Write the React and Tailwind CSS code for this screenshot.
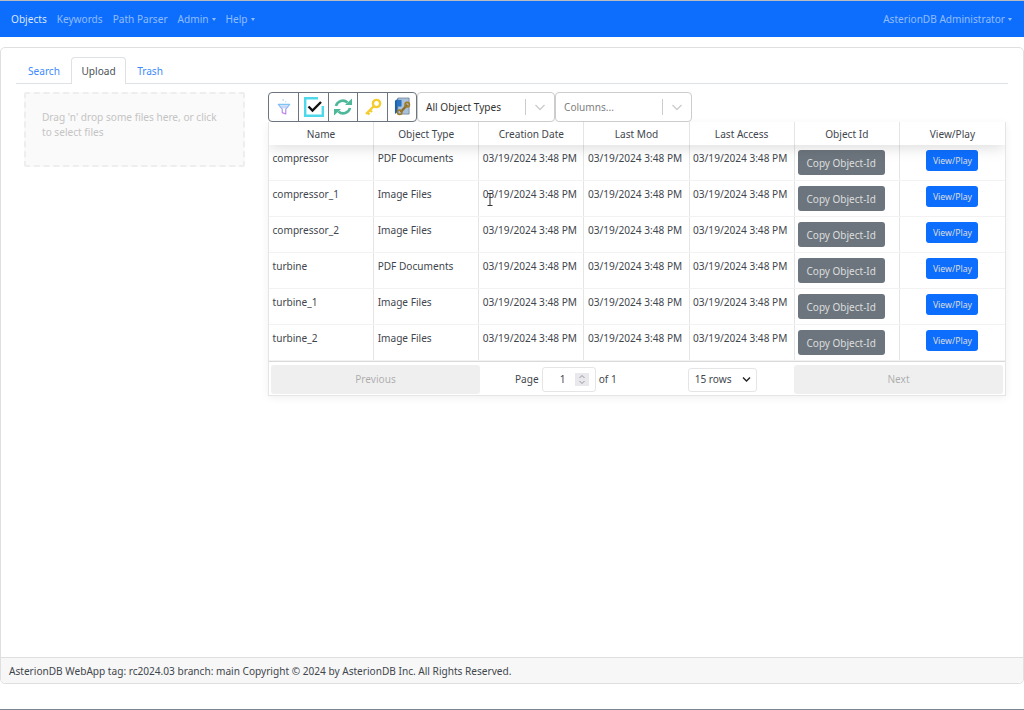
const rows = [
  ["compressor", "PDF Documents"],
  ["compressor_1", "Image Files"],
  ["compressor_2", "Image Files"],
  ["turbine", "PDF Documents"],
  ["turbine_1", "Image Files"],
  ["turbine_2", "Image Files"],
];
const date = "03/19/2024 3:48 PM";
const headers = ["Name", "Object Type", "Creation Date", "Last Mod", "Last Access", "Object Id", "View/Play"];

function Caret() {
  return <span className="ml-[3px] inline-block align-[2px] border-x-[2.5px] border-t-[3px] border-x-transparent border-t-current" />;
}

function Funnel() {
  return (
    <svg width="14" height="18" viewBox="0 0 16 20">
      <defs>
        <linearGradient id="fg" x1="0" y1="0" x2="0" y2="1">
          <stop offset="0" stopColor="#7cc4f5" />
          <stop offset="1" stopColor="#c77df0" />
        </linearGradient>
      </defs>
      <circle cx="7" cy="2" r="0.9" fill="#8cc8f5" />
      <circle cx="10" cy="4" r="0.7" fill="#8cc8f5" />
      <path d="M1.5 7h13l-4.5 5.5V18l-4 -1.5v-4z" fill="none" stroke="url(#fg)" strokeWidth="1.4" strokeLinejoin="round" />
      <path d="M3 8h10l-3 3.5H6z" fill="#a9c9f5" opacity="0.7" />
    </svg>
  );
}
function Check() {
  return (
    <svg width="20" height="20" viewBox="0 0 20 20">
      <path d="M14 1.2H1.2v17.6h17.6V9" fill="none" stroke="#4dd9ea" strokeWidth="2.4" />
      <path d="M4.5 9.5l4 4L17 5" fill="none" stroke="#111111" strokeWidth="2.4" />
    </svg>
  );
}
function Refresh() {
  return (
    <svg width="20" height="18" viewBox="0 0 20 18" fill="none" stroke="#4fb89a" strokeWidth="2.6">
      <path d="M3 8a7 7 0 0 1 11.5-3.5" />
      <path d="M17 10a7 7 0 0 1-11.5 3.5" />
      <path d="M12 7h7V0.5z" fill="#4fb89a" stroke="none" />
      <path d="M8 11H1v6.5z" fill="#4fb89a" stroke="none" />
    </svg>
  );
}
function Key() {
  return (
    <svg width="18" height="18" viewBox="0 0 18 18" fill="none" stroke="#f5cc2e">
      <circle cx="12.5" cy="5.5" r="3.6" strokeWidth="2.4" />
      <path d="M10 8L2 16M3.5 14.5l2 2M6 12l2 2" strokeWidth="2.4" />
    </svg>
  );
}
function Linked() {
  return (
    <svg width="17" height="20" viewBox="0 0 18 21">
      <path d="M1 4l4-3v14l-4 3z" fill="#1e5fa8" />
      <path d="M4 1h12v17H4z" fill="#a9c2da" stroke="#6b7f93" strokeWidth="0.8" />
      <path d="M3 3h5v7H3z" fill="#2a72c4" />
      <path d="M7 16l7-8" stroke="#8a6a25" strokeWidth="2.4" fill="none" />
      <circle cx="6" cy="16" r="2.4" fill="none" stroke="#a27a22" strokeWidth="1.6" />
      <circle cx="14" cy="8" r="2.4" fill="none" stroke="#a27a22" strokeWidth="1.6" />
    </svg>
  );
}

function SelectBox({ label, muted, width }) {
  return (
    <div className={`flex h-[30px] items-center rounded-[4px] border border-[#cccccc] bg-white ${width}`}>
      <span className={`flex-1 truncate pl-2 pt-[2px] ${muted ? "text-[#808080]" : "text-[#333333]"}`}>{label}</span>
      <span className="h-[16px] w-px bg-[#cccccc]" />
      <span className="flex w-[28px] justify-center">
        <svg width="10" height="7" viewBox="0 0 10 7" fill="none" stroke="#cccccc" strokeWidth="1.3">
          <path d="M0.5 1l4.5 4.5L9.5 1" />
        </svg>
      </span>
    </div>
  );
}

export default function App() {
  return (
    <div className="h-[710px] w-[1024px] overflow-hidden bg-white font-['Noto_Sans',sans-serif] text-[10.1px] text-[#3f464d]">
      <div className="h-px bg-[#b9bcc0]" />
      <nav className="flex h-[36px] items-center justify-between bg-[#0d6efd] pl-[11px] pr-[12px] pt-[2px] text-[#ffffff8c]">
        <div className="flex items-center gap-[10px]">
          <span className="text-[#ffffffd9]">Objects</span>
          <span>Keywords</span>
          <span>Path Parser</span>
          <span>Admin<Caret /></span>
          <span>Help<Caret /></span>
        </div>
        <span>AsterionDB Administrator<Caret /></span>
      </nav>

      <main className="mt-[10px] flex h-[637px] flex-col rounded-[5px] border border-[#dfdfdf]">
        <div className="flex-1 px-[15px] pt-[9px]">
          <div className="flex h-[27px] items-end border-b border-[#dee2e6] text-[#3d8bfd]">
            <span className="pl-[12px] pr-[11px] pb-[4px]">Search</span>
            <span className="-mb-px flex h-[27px] items-center rounded-t-[4px] border border-b-0 border-[#dee2e6] bg-white px-[9.5px] pt-[2px] text-[#495057]">Upload</span>
            <span className="px-[11px] pb-[4px]">Trash</span>
          </div>
          <div className="mt-[8px] flex items-start">
            <div className="ml-[8px] h-[75px] w-[221px] rounded-[2px] border-2 border-dashed border-[#eeeeee] bg-[#fafafa] px-[16px] py-[16px] leading-[15px] text-[#c4c4c4]">
              Drag 'n' drop some files here, or click to select files
            </div>
            <div className="ml-[23px] w-[738px]">
              <div className="flex h-[30px]">
                <div className="flex h-[30px] w-[149px] rounded-[4px] border border-[#6c757d]">
                  <span className="flex w-[29px] items-center justify-center"><Funnel /></span>
                  <span className="flex w-[30px] items-center justify-center border-l border-[#6c757d]"><Check /></span>
                  <span className="flex w-[29px] items-center justify-center border-l border-[#6c757d]"><Refresh /></span>
                  <span className="flex w-[30px] items-center justify-center border-l border-[#6c757d]"><Key /></span>
                  <span className="flex flex-1 items-center justify-center border-l border-[#6c757d]"><Linked /></span>
                </div>
                <SelectBox label="All Object Types" width="w-[138px]" />
                <SelectBox label="Columns..." muted width="w-[137px]" />
              </div>
              <div className="border border-t-0 border-[#0000001a] shadow-[0_2px_8px_0_#0000000f]">
                <div className="relative grid h-[23px] grid-cols-7 shadow-[0_2px_15px_0_#00000026] [clip-path:inset(0_0_-20px_0)]">
                  {headers.map((h, i) => (
                    <div key={h} className={`flex items-center justify-center pt-[3px] ${i < 6 ? "border-r border-[#0000001a]" : ""}`}>{h}</div>
                  ))}
                </div>
                {rows.map(([name, type], r) => (
                  <div key={name} className="grid h-[36px] grid-cols-7 border-b border-[#0000000d]">
                    <div className="border-r border-[#0000001a] px-[3.5px] pt-[6px]">{name}</div>
                    <div className="border-r border-[#0000001a] px-[3.5px] pt-[6px]">{type}</div>
                    <div className="relative border-r border-[#0000001a] px-[3.5px] pt-[6px]">
                      {date}
                      {r === 1 && (
                        <svg className="absolute left-[8px] top-[12px]" width="6" height="13" viewBox="0 0 6 13" fill="none" stroke="#333333" strokeWidth="1">
                          <path d="M0.5 0.5h5M3 0.5v12M0.5 12.5h5" />
                        </svg>
                      )}
                    </div>
                    <div className="border-r border-[#0000001a] px-[3.5px] pt-[6px]">{date}</div>
                    <div className="border-r border-[#0000001a] px-[3.5px] pt-[6px]">{date}</div>
                    <div className="border-r border-[#0000001a] px-[3px] pt-[5px]">
                      <span className="flex h-[25px] w-[87px] items-center justify-center rounded-[3px] bg-[#6c757d] pt-px text-[10px] text-[#dddddd]">Copy Object-Id</span>
                    </div>
                    <div className="flex justify-center pt-[5px]">
                      <span className="flex h-[21px] w-[52px] items-center justify-center rounded-[3px] bg-[#0d6efd] pt-[2px] text-[8.7px] text-[#dddddd]">View/Play</span>
                    </div>
                  </div>
                ))}
                <div className="flex h-[34px] items-center border-t border-[#00000026] pl-[2px] pr-[2px] pt-[2px]">
                  <span className="flex h-[29px] w-[209px] items-center justify-center rounded-[3px] bg-[#0000001a] text-[#00000080] opacity-60">Previous</span>
                  <div className="flex flex-1 items-center pl-[35px]">
                    <span>Page</span>
                    <span className="ml-[3px] flex h-[25px] w-[54px] items-center rounded-[3px] border border-[#0000001a] pl-[17px] pr-[6px]">
                      <span className="flex-1">1</span>
                      <span className="flex h-[13px] w-[14px] flex-col items-center justify-center bg-[#e9e9ed] text-[#777]">
                        <svg width="8" height="11" viewBox="0 0 8 11" fill="none" stroke="#808080" strokeWidth="0.8"><path d="M1.5 4L4 1.5 6.5 4M1.5 7L4 9.5 6.5 7" /></svg>
                      </span>
                    </span>
                    <span className="ml-[3px]">of 1</span>
                    <span className="ml-[71px] flex h-[24px] w-[69px] items-center rounded-[3px] border border-[#0000001a] pl-[6px]">
                      <span className="flex-1">15 rows</span>
                      <svg className="mr-[5px]" width="9" height="7" viewBox="0 0 9 7" fill="none" stroke="#222" strokeWidth="1.4"><path d="M1 1.5l3.5 3.5L8 1.5" /></svg>
                    </span>
                  </div>
                  <span className="flex h-[29px] w-[209px] items-center justify-center rounded-[3px] bg-[#0000001a] text-[#00000080] opacity-60">Next</span>
                </div>
              </div>
            </div>
          </div>
        </div>
        <footer className="flex h-[26px] items-center rounded-b-[5px] border-t border-[#dfdfdf] bg-[#f7f7f7] pl-[8px] pt-[2px]">
          AsterionDB WebApp tag: rc2024.03 branch: main Copyright © 2024 by AsterionDB Inc. All Rights Reserved.
        </footer>
      </main>
      <div className="mt-[25px] h-px bg-[#7a8791]" />
    </div>
  );
}
